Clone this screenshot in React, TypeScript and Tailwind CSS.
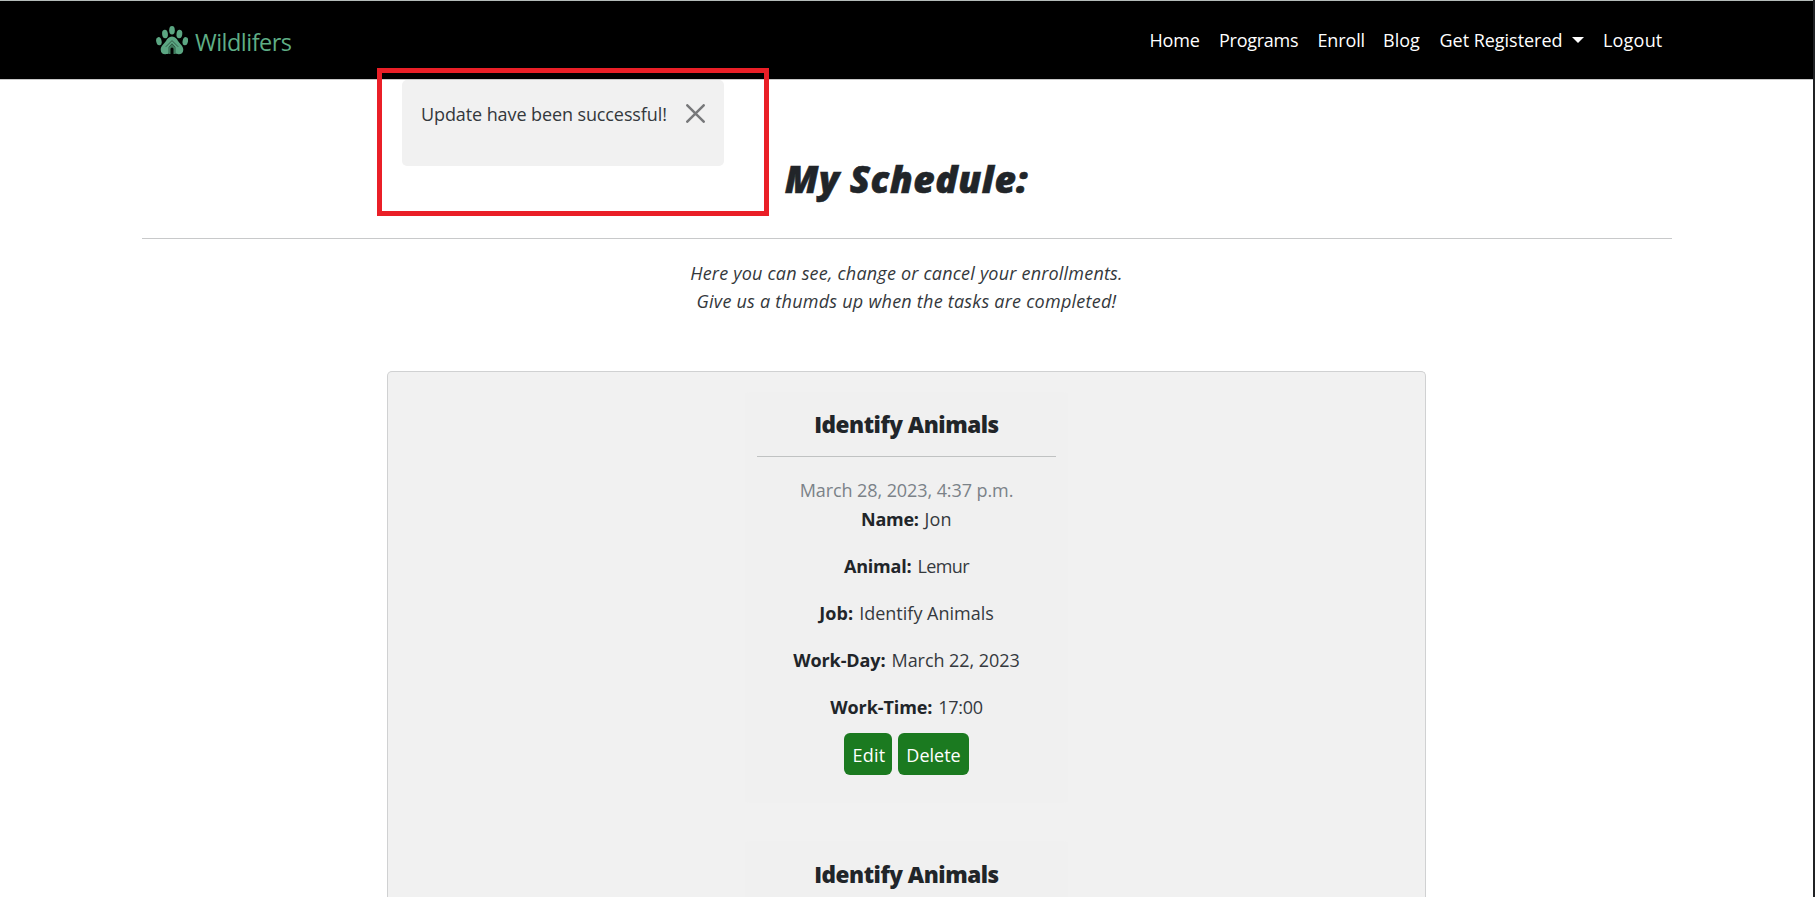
import React from 'react';

function PawLogo() {
  return (
    <svg className="h-[29px] w-[32px]" viewBox="0 0 32 29" fill="#5ba682">
      <ellipse cx="2.9" cy="15.2" rx="2.700" ry="4.1" transform="rotate(-12 2.9 15.2)" />
      <ellipse cx="9" cy="8" rx="2.9" ry="4.3" transform="rotate(-6 9 8)" />
      <ellipse cx="16" cy="4.3" rx="2.8" ry="4.3" />
      <ellipse cx="23.4" cy="8" rx="2.9" ry="4.3" transform="rotate(6 23.4 8)" />
      <ellipse cx="29.3" cy="15.2" rx="2.7" ry="4.1" transform="rotate(12 29.3 15.2)" />
      <path d="M16 10.500c-3.200 0-4.800 2.200-6 4.500-1.300 2.300-5.300 4.600-5.300 8.700 0 2.900 2 4.600 4.500 4.600 1.700 0 2.800-.5 3.600-.7V21l3.200-3.400L19.200 21v6.600c.8.200 1.900.7 3.600.7 2.500 0 4.500-1.700 4.500-4.600 0-4.100-4-6.400-5.300-8.700-1.200-2.300-2.800-4.500-6-4.500z" />
      <path d="M9.800 20.800L16 14.600L22.200 20.800" fill="none" stroke="#000" strokeOpacity="0.45" strokeWidth="1" />
      <path d="M12.600 21.200L16 17.700l3.400 3.500V28h-1.900v-5a1.500 1.500 0 0 0-3 0v5h-1.900z" fill="#3f7a5c" />
    </svg>
  );
}

type Field = { label: string; value: string; labelGap: string; valueGap: string };

const fields: Field[] = [
  { label: 'Name:', value: 'Jon', labelGap: 'tracking-[-0.3px]', valueGap: 'tracking-[0.2px]' },
  { label: 'Animal:', value: 'Lemur', labelGap: 'tracking-[-0.2px]', valueGap: 'tracking-[-0.6px]' },
  { label: 'Job:', value: 'Identify Animals', labelGap: 'tracking-[0.1px]', valueGap: 'tracking-[0px]' },
  { label: 'Work-Day:', value: 'March 22, 2023', labelGap: 'tracking-[-0.1px]', valueGap: 'tracking-[-0.05px]' },
  { label: 'Work-Time:', value: '17:00', labelGap: 'tracking-[-0.1px]', valueGap: 'tracking-[-0.3px]' },
];

function EnrollmentTitle() {
  return (
    <h2 className="h-[46px] text-[22.5px] leading-[30px] font-extrabold tracking-[-0.46px]">Identify Animals</h2>
  );
}

function Enrollment() {
  return (
    <article className="flex h-[411px] w-[323px] shrink-0 flex-col items-center rounded bg-[#f0f0f0] pt-[18px]">
      <EnrollmentTitle />
      <hr className="w-[299px] border-t border-[#c0c2c2]" />
      <p className="mt-[19px] h-[28px] leading-[28px] tracking-[-0.08px] text-[#7b8288]">March 28, 2023, 4:37 p.m.</p>
      <dl className="mt-px flex flex-col items-center gap-[19px]">
        {fields.map((f) => (
          <div key={f.label} className="flex h-[28px] gap-[6px] leading-[28px]">
            <dt className={`font-bold ${f.labelGap}`}>{f.label}</dt>
            <dd className={`text-[#35393e] ${f.valueGap}`}>{f.value}</dd>
          </div>
        ))}
      </dl>
      <div className="mt-[12px] flex gap-[6px] text-white">
        <button className="h-[42px] w-[48px] rounded-[6px] bg-[#1b7a20] pt-[3px] pl-[2px] tracking-[0.25px]">Edit</button>
        <button className="h-[42px] w-[71px] rounded-[6px] bg-[#1b7a20] pt-[3px]">Delete</button>
      </div>
    </article>
  );
}

export default function App() {
  return (
    <div className="relative flex h-[897px] w-[1815px] overflow-hidden bg-white font-['Open_Sans','Noto_Sans',sans-serif] text-[18px] text-[#212529]">
      <div className="flex min-w-0 flex-1 flex-col">
        <header className="flex h-[80px] shrink-0 items-start border-t border-b border-t-[#b4bbb9] border-b-[#c8c8c8] bg-black pl-[156px] text-white">
          <a className="flex items-start pt-[25px]">
            <PawLogo />
            <span className="-mt-[1px] ml-[7px] text-[23.5px] leading-[34px] tracking-[-0.53px] text-[#5fae86]">Wildlifers</span>
          </a>
          <nav className="ml-auto flex pt-[25px] pr-[150px] leading-[28px]">
            <a className="w-[69.5px] tracking-[-0.2px]">Home</a>
            <a className="w-[98.5px] tracking-[-0.26px]">Programs</a>
            <a className="w-[65.5px] tracking-[-0.15px]">Enroll</a>
            <a className="w-[56.5px]">Blog</a>
            <a className="flex w-[163.5px]">
              <span className="tracking-[-0.03px]">Get Registered</span>
              <span className="mt-[11px] ml-[10px] h-0 w-0 border-x-[6px] border-t-[6px] border-x-transparent border-t-white" />
            </a>
            <a className="w-[60px] tracking-[0.2px]">Logout</a>
          </nav>
        </header>

        <main className="flex min-h-0 flex-1 flex-col items-center">
          <h1 className="mt-[72px] h-[86px] shrink-0 text-[37px] leading-[54px] font-extrabold tracking-[0.55px] italic [-webkit-text-stroke:0.6px_#212529]">
            My Schedule:
          </h1>
          <hr className="w-[1530px] border-t border-[#c8c9ca]" />
          <p className="mt-[20px] h-[112px] shrink-0 text-center leading-[28px] text-[#34383c] italic">
            <span className="tracking-[0.2px]">Here you can see, change or cancel your enrollments.</span>
            <br />
            <span className="tracking-[0.24px]">Give us a thumds up when the tasks are completed!</span>
          </p>
          <section className="flex min-h-0 w-[1039px] flex-1 flex-col items-center gap-[38px] rounded-t-[5px] border border-b-0 border-[#d0d1d2] bg-[#f1f1f1] pt-[20px]">
            <Enrollment />
            <article className="flex w-[323px] flex-1 flex-col items-center rounded-t bg-[#f0f0f0] pt-[19px]">
              <EnrollmentTitle />
            </article>
          </section>
        </main>
      </div>
      <div className="w-[2px] bg-[#202124]" />

      <div className="absolute top-[80px] left-[402px] flex h-[86px] w-[322px] items-start rounded-[5px] bg-[#f1f1f1] pt-[20px] pl-[19px] text-[#34383c]">
        <span className="leading-[28px] tracking-[-0.1px]">Update have been successful!</span>
        <svg className="mt-[4px] mr-[19px] ml-auto h-[19px] w-[19px]" viewBox="0 0 19 19" stroke="#77787a" strokeWidth="2.5" strokeLinecap="round">
          <path d="M1.300 1.300L17.700 17.700M17.700 1.300L1.300 17.700" />
        </svg>
      </div>
      <div className="absolute top-[68px] left-[377px] h-[148px] w-[392px] border-[5px] border-[#ea1f27]" />
    </div>
  );
}
